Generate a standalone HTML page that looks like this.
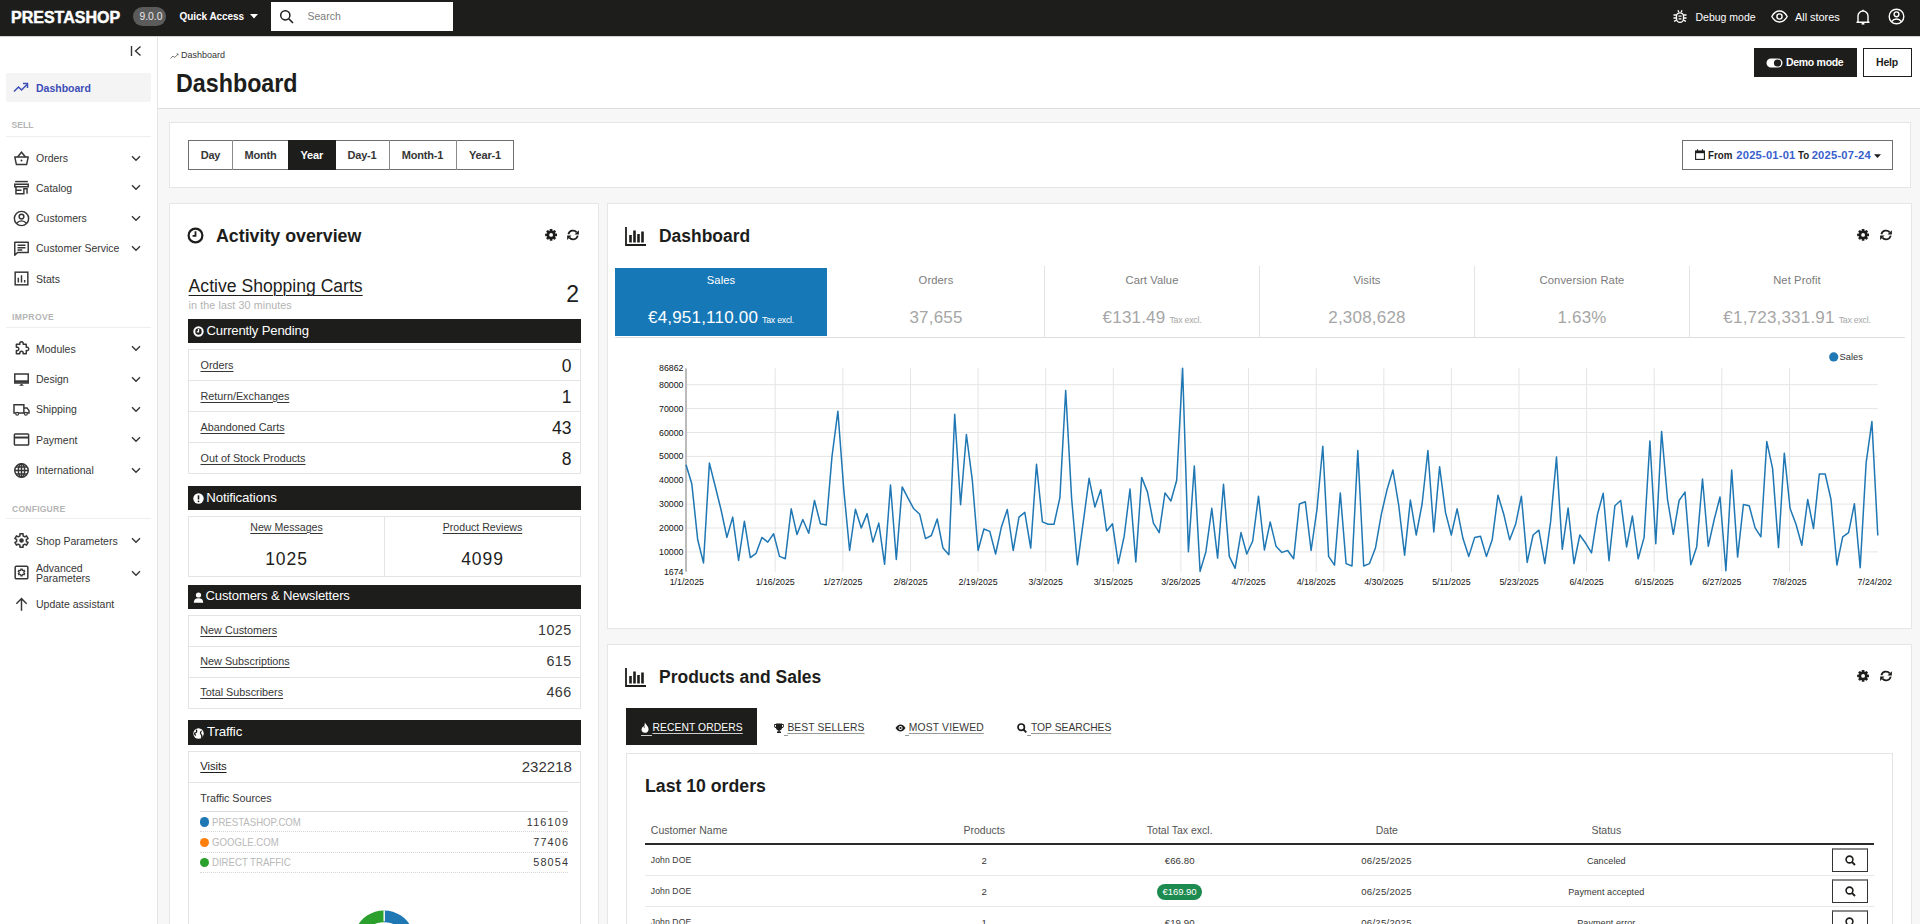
<!DOCTYPE html>
<html><head><meta charset="utf-8">
<style>
*{box-sizing:border-box;margin:0;padding:0}
html,body{width:1920px;height:924px;overflow:hidden;background:#f7f7f7;font-family:"Liberation Sans",sans-serif;color:#1d1d1b}
.abs{position:absolute}
#top{position:absolute;left:0;top:0;width:1920px;height:36px;background:#1d1d1b}
#side{position:absolute;left:0;top:36px;width:158px;height:888px;background:#fff;border-right:1px solid #e4e4e4}
#phead{position:absolute;left:158px;top:36px;width:1762px;height:73px;background:#fff;border-bottom:1px solid #dcdcdc}
.card{position:absolute;background:#fff;border:1px solid #e7e7e7}
.t{position:absolute;white-space:nowrap;line-height:1}
</style></head><body>
<!-- TOP BAR -->
<div id="top">
  <div class="t" style="left:11px;top:9.3px;font-size:17.4px;font-weight:700;color:#fff;letter-spacing:0px;-webkit-text-stroke:0.5px #fff;transform:scaleX(0.92);transform-origin:0 0">PRESTASHOP</div>
  <div class="abs" style="left:133px;top:7px;width:33px;height:19px;border-radius:10px;background:#5b5b5b"></div>
  <div class="t" style="left:139.5px;top:11.6px;font-size:10.3px;color:#e8e8e8">9.0.0</div>
  <div class="t" style="left:179.5px;top:11.6px;font-size:10px;font-weight:700;color:#fff;letter-spacing:-0.05px">Quick Access</div>
  <svg class="abs" style="left:250px;top:14px" width="8" height="5" viewBox="0 0 8 5"><path d="M0 0H8L4 4.5Z" fill="#fff"/></svg>
  <div class="abs" style="left:271px;top:2px;width:182px;height:29px;background:#fff"></div>
  <svg class="abs" style="left:279px;top:9px" width="16" height="16" viewBox="0 0 16 16"><circle cx="6.3" cy="6.3" r="4.6" fill="none" stroke="#1d1d1b" stroke-width="1.5"/><path d="M9.7 9.7L14 14" stroke="#1d1d1b" stroke-width="1.6"/></svg>
  <div class="t" style="left:307.5px;top:11.1px;font-size:10.5px;color:#7a7a7a">Search</div>
  <!-- right -->
  <svg class="abs" style="left:1673px;top:9px" width="14" height="15" viewBox="0 0 14 15"><g fill="none" stroke="#fff" stroke-width="1.3"><rect x="3.5" y="3.8" width="7" height="9.5" rx="3.5"/><path d="M5 1.2L5.8 3.2M9 1.2L8.2 3.2M0.5 6H3.5M10.5 6H13.5M0.5 9H3.5M10.5 9H13.5M1 12.3L3.6 11.2M13 12.3L10.4 11.2M5.5 7.2H8.5M5.5 9.8H8.5"/></g></svg>
  <div class="t" style="left:1695.5px;top:11.5px;font-size:10.5px;color:#fff">Debug mode</div>
  <svg class="abs" style="left:1771px;top:10px" width="17" height="13" viewBox="0 0 17 13"><path d="M0.8 6.5C3 2.4 5.6 1 8.5 1S14 2.4 16.2 6.5C14 10.6 11.4 12 8.5 12S3 10.6 0.8 6.5Z" fill="none" stroke="#fff" stroke-width="1.4"/><circle cx="8.5" cy="6.5" r="2.6" fill="none" stroke="#fff" stroke-width="1.4"/></svg>
  <div class="t" style="left:1795px;top:11.5px;font-size:11px;color:#fff;letter-spacing:-0.05px">All stores</div>
  <svg class="abs" style="left:1856px;top:9px" width="14" height="16" viewBox="0 0 14 16"><path d="M2 12.5V7A5 5 0 0 1 12 7V12.5L13 13.3H1Z" fill="none" stroke="#fff" stroke-width="1.4" stroke-linejoin="round"/><path d="M5.6 14.8H8.4" stroke="#fff" stroke-width="1.6"/><path d="M7 0.8V2" stroke="#fff" stroke-width="1.4"/></svg>
  <svg class="abs" style="left:1888px;top:8px" width="17" height="17" viewBox="0 0 17 17"><circle cx="8.5" cy="8.5" r="7.3" fill="none" stroke="#fff" stroke-width="1.4"/><circle cx="8.5" cy="6.3" r="2.4" fill="none" stroke="#fff" stroke-width="1.4"/><path d="M3.6 13.6C5 11.6 6.5 11 8.5 11S12 11.6 13.4 13.6" fill="none" stroke="#fff" stroke-width="1.4"/></svg>
</div>
<!-- SIDEBAR -->
<div id="side">
  <svg class="abs" style="left:130px;top:9px" width="12" height="12" viewBox="0 0 12 12"><path d="M1.5 1V11" stroke="#333" stroke-width="1.4"/><path d="M10.5 1.5L5.5 6L10.5 10.5" fill="none" stroke="#333" stroke-width="1.4"/></svg>
  <div class="abs" style="left:6px;top:37px;width:145px;height:29px;background:#f4f4f4;border-radius:2px"></div>
  <svg class="abs" style="left:13px;top:46px" width="16" height="11" viewBox="0 0 16 11"><path d="M1 9.5L5.5 5L8.5 8L14 2.5" fill="none" stroke="#3d4db8" stroke-width="1.5"/><path d="M10 1.5H14.5V6" fill="none" stroke="#3d4db8" stroke-width="1.5"/></svg>
  <div class="t" style="left:36px;top:46.7px;font-size:10.5px;font-weight:700;color:#3d4db8">Dashboard</div>

  <div class="t" style="left:11.5px;top:85.3px;font-size:8.6px;font-weight:700;color:#b5b5b5">SELL</div>
  <div class="abs" style="left:6px;top:100px;width:145px;height:1px;background:#eeeeee"></div>
  <div class="t" style="left:12px;top:277px;font-size:8.6px;font-weight:700;color:#b5b5b5;letter-spacing:0.35px">IMPROVE</div>
  <div class="abs" style="left:6px;top:291px;width:145px;height:1px;background:#eeeeee"></div>
  <div class="t" style="left:12px;top:468.5px;font-size:8.6px;font-weight:700;color:#b5b5b5;letter-spacing:0.2px">CONFIGURE</div>
  <div class="abs" style="left:6px;top:482px;width:145px;height:1px;background:#eeeeee"></div>
  <div class="t" style="left:36px;top:117.3px;font-size:10.5px;color:#363636">Orders</div>
  <svg class="abs" style="left:11.6px;top:112.9px" width="19" height="19" viewBox="0 0 24 24"><path d="M3.5 10H20.5L18.5 19.5H5.5Z" stroke="#363636" stroke-width="1.85" fill="none" stroke-linejoin="round"/><path d="M7 10L12 4L17 10" stroke="#363636" stroke-width="1.85" fill="none"/><circle cx="12" cy="14.5" r="1.2" fill="#363636"/></svg>
  <svg class="abs" style="left:131px;top:118.9px" width="10" height="7" viewBox="0 0 10 7"><path d="M1 1.2L5 5.2L9 1.2" fill="none" stroke="#363636" stroke-width="1.4"/></svg>
  <div class="t" style="left:36px;top:146.8px;font-size:10.5px;color:#363636">Catalog</div>
  <svg class="abs" style="left:11.6px;top:142.4px" width="19" height="19" viewBox="0 0 24 24"><path d="M4 4.5H20" stroke="#363636" stroke-width="1.85" fill="none"/><path d="M3.5 8H20.5V11H3.5Z" stroke="#363636" stroke-width="1.85" fill="none"/><path d="M5 11V20H15V13.5H19V20M5 15.5H12" stroke="#363636" stroke-width="1.85" fill="none"/></svg>
  <svg class="abs" style="left:131px;top:148.4px" width="10" height="7" viewBox="0 0 10 7"><path d="M1 1.2L5 5.2L9 1.2" fill="none" stroke="#363636" stroke-width="1.4"/></svg>
  <div class="t" style="left:36px;top:177.1px;font-size:10.5px;color:#363636">Customers</div>
  <svg class="abs" style="left:11.6px;top:172.7px" width="19" height="19" viewBox="0 0 24 24"><circle cx="12" cy="12" r="9" stroke="#363636" stroke-width="1.85" fill="none"/><circle cx="12" cy="9.5" r="3" stroke="#363636" stroke-width="1.85" fill="none"/><path d="M6 18C7.6 15.8 9.6 15 12 15S16.4 15.8 18 18" stroke="#363636" stroke-width="1.85" fill="none"/></svg>
  <svg class="abs" style="left:131px;top:178.7px" width="10" height="7" viewBox="0 0 10 7"><path d="M1 1.2L5 5.2L9 1.2" fill="none" stroke="#363636" stroke-width="1.4"/></svg>
  <div class="t" style="left:36px;top:207.4px;font-size:10.5px;color:#363636">Customer Service</div>
  <svg class="abs" style="left:11.6px;top:203.0px" width="19" height="19" viewBox="0 0 24 24"><path d="M3.5 20.5V4H20.5V17H7Z" stroke="#363636" stroke-width="1.85" fill="none" stroke-linejoin="round"/><path d="M7 8H17M7 11H17M7 14H13" stroke="#363636" stroke-width="1.85" fill="none"/></svg>
  <svg class="abs" style="left:131px;top:209.0px" width="10" height="7" viewBox="0 0 10 7"><path d="M1 1.2L5 5.2L9 1.2" fill="none" stroke="#363636" stroke-width="1.4"/></svg>
  <div class="t" style="left:36px;top:237.6px;font-size:10.5px;color:#363636">Stats</div>
  <svg class="abs" style="left:11.6px;top:233.2px" width="19" height="19" viewBox="0 0 24 24"><rect x="4" y="4" width="16" height="16" stroke="#363636" stroke-width="1.85" fill="none"/><path d="M8 17V11M12 17V8M16 17V14" stroke="#363636" stroke-width="1.85" fill="none"/></svg>
  <div class="t" style="left:36px;top:307.8px;font-size:10.5px;color:#363636">Modules</div>
  <svg class="abs" style="left:11.6px;top:303.4px" width="19" height="19" viewBox="0 0 24 24"><path d="M4 8H8.5A2.2 2.2 0 1 1 12.5 8H16.5V12A2.2 2.2 0 1 1 16.5 16V20H12.5A2.2 2.2 0 1 0 8.5 20H4V16A2.2 2.2 0 1 0 4 12Z" stroke="#363636" stroke-width="1.85" fill="none" stroke-linejoin="round" transform="translate(1.5,-1.5)"/></svg>
  <svg class="abs" style="left:131px;top:309.4px" width="10" height="7" viewBox="0 0 10 7"><path d="M1 1.2L5 5.2L9 1.2" fill="none" stroke="#363636" stroke-width="1.4"/></svg>
  <div class="t" style="left:36px;top:338.0px;font-size:10.5px;color:#363636">Design</div>
  <svg class="abs" style="left:11.6px;top:333.6px" width="19" height="19" viewBox="0 0 24 24"><path d="M3.5 5H20.5V16.5H3.5Z" stroke="#363636" stroke-width="1.85" fill="none"/><path d="M3.5 14.5H20.5" stroke="#363636" stroke-width="3"/><path d="M9 20H15L12 17Z" fill="#363636"/></svg>
  <svg class="abs" style="left:131px;top:339.6px" width="10" height="7" viewBox="0 0 10 7"><path d="M1 1.2L5 5.2L9 1.2" fill="none" stroke="#363636" stroke-width="1.4"/></svg>
  <div class="t" style="left:36px;top:368.3px;font-size:10.5px;color:#363636">Shipping</div>
  <svg class="abs" style="left:11.6px;top:363.9px" width="19" height="19" viewBox="0 0 24 24"><path d="M2.5 6H15V16.5H2.5Z" stroke="#363636" stroke-width="1.85" fill="none"/><path d="M15 10H19L21.5 13.5V16.5H15" stroke="#363636" stroke-width="1.85" fill="none"/><circle cx="6.5" cy="17.5" r="1.8" fill="#fff" stroke="#363636" stroke-width="1.5"/><circle cx="17.5" cy="17.5" r="1.8" fill="#fff" stroke="#363636" stroke-width="1.5"/></svg>
  <svg class="abs" style="left:131px;top:369.9px" width="10" height="7" viewBox="0 0 10 7"><path d="M1 1.2L5 5.2L9 1.2" fill="none" stroke="#363636" stroke-width="1.4"/></svg>
  <div class="t" style="left:36px;top:398.6px;font-size:10.5px;color:#363636">Payment</div>
  <svg class="abs" style="left:11.6px;top:394.2px" width="19" height="19" viewBox="0 0 24 24"><rect x="3" y="5" width="18" height="14" rx="1" stroke="#363636" stroke-width="1.85" fill="none"/><path d="M3 9.5H21" stroke="#363636" stroke-width="2.5"/></svg>
  <svg class="abs" style="left:131px;top:400.2px" width="10" height="7" viewBox="0 0 10 7"><path d="M1 1.2L5 5.2L9 1.2" fill="none" stroke="#363636" stroke-width="1.4"/></svg>
  <div class="t" style="left:36px;top:428.9px;font-size:10.5px;color:#363636">International</div>
  <svg class="abs" style="left:11.6px;top:424.5px" width="19" height="19" viewBox="0 0 24 24"><circle cx="12" cy="12" r="8.5" stroke="#363636" stroke-width="1.85" fill="none"/><path d="M3.5 12H20.5M12 3.5V20.5M5 7.5H19M5 16.5H19" stroke="#363636" stroke-width="1.85" fill="none"/><ellipse cx="12" cy="12" rx="4" ry="8.5" stroke="#363636" stroke-width="1.85" fill="none"/></svg>
  <svg class="abs" style="left:131px;top:430.5px" width="10" height="7" viewBox="0 0 10 7"><path d="M1 1.2L5 5.2L9 1.2" fill="none" stroke="#363636" stroke-width="1.4"/></svg>
  <div class="t" style="left:36px;top:499.7px;font-size:10.5px;color:#363636">Shop Parameters</div>
  <svg class="abs" style="left:11.6px;top:495.3px" width="19" height="19" viewBox="0 0 24 24"><path d="M10.07 6.00L10.01 3.53L13.99 3.53L13.93 6.00L16.23 7.33L18.34 6.04L20.33 9.49L18.16 10.67L18.16 13.33L20.33 14.51L18.34 17.96L16.23 16.67L13.93 18.00L13.99 20.47L10.01 20.47L10.07 18.00L7.77 16.67L5.66 17.96L3.67 14.51L5.84 13.33L5.84 10.67L3.67 9.49L5.66 6.04L7.77 7.33Z" stroke="#363636" stroke-width="1.9" fill="none" stroke-linejoin="round"/><circle cx="12" cy="12" r="2.9" fill="#363636"/></svg>
  <svg class="abs" style="left:131px;top:501.3px" width="10" height="7" viewBox="0 0 10 7"><path d="M1 1.2L5 5.2L9 1.2" fill="none" stroke="#363636" stroke-width="1.4"/></svg>
  <div class="t" style="left:36px;top:526.6px;font-size:10.5px;color:#363636">Advanced</div>
  <div class="t" style="left:36px;top:537.4px;font-size:10.5px;color:#363636">Parameters</div>
  <svg class="abs" style="left:11.6px;top:526.7px" width="19" height="19" viewBox="0 0 24 24"><rect x="4" y="4" width="16" height="16" rx="1.5" stroke="#363636" stroke-width="1.9" fill="none"/><path d="M11.06 9.15L11.00 7.82L13.00 7.82L12.94 9.15L14.00 9.76L15.12 9.04L16.12 10.78L14.94 11.39L14.94 12.61L16.12 13.22L15.12 14.96L14.00 14.24L12.94 14.85L13.00 16.18L11.00 16.18L11.06 14.85L10.00 14.24L8.88 14.96L7.88 13.22L9.06 12.61L9.06 11.39L7.88 10.78L8.88 9.04L10.00 9.76Z" stroke="#363636" stroke-width="1.5" fill="none" stroke-linejoin="round"/></svg>
  <svg class="abs" style="left:131px;top:533.6px" width="10" height="7" viewBox="0 0 10 7"><path d="M1 1.2L5 5.2L9 1.2" fill="none" stroke="#363636" stroke-width="1.4"/></svg>
  <div class="t" style="left:36px;top:563.3px;font-size:10.5px;color:#363636">Update assistant</div>
  <svg class="abs" style="left:11.6px;top:558.9px" width="19" height="19" viewBox="0 0 24 24"><path d="M12 20V4.5M5.5 11L12 4.5L18.5 11" stroke="#363636" stroke-width="1.85" fill="none"/></svg>
</div>
<div class="abs" style="left:158px;top:36px;width:1762px;height:73px;background:#fff;border-bottom:1px solid #dedede"></div>
<div class="abs" style="left:0px;top:36px;width:1920px;height:1px;background:#d2d2d2"></div>
<svg class="abs" style="left:170px;top:53px" width="9" height="6" viewBox="0 0 9 6"><path d="M0.5 5.5L3 3L4.8 4.5L7.8 1.2" fill="none" stroke="#666" stroke-width="0.9"/><path d="M6.2 0.6H8.4V2.8Z" fill="#666"/></svg>
<div class="t" style="left:181px;top:50.8px;font-size:9px;font-weight:400;color:#363636;">Dashboard</div>
<div class="t" style="left:176px;top:70.5px;font-size:25.3px;font-weight:700;color:#1d1d1b;transform:scaleX(0.92);transform-origin:0 0">Dashboard</div>
<div class="abs" style="left:1754px;top:48px;width:103px;height:29px;background:#1d1d1b"></div>
<svg class="abs" style="left:1766px;top:58px" width="17" height="10" viewBox="0 0 17 10"><rect x="0.5" y="0.5" width="16" height="9" rx="4.5" fill="#fff"/><circle cx="11.5" cy="5" r="3.6" fill="#1d1d1b"/></svg>
<div class="t" style="left:1786px;top:57.4px;font-size:10.5px;font-weight:700;color:#fff;letter-spacing:-0.3px">Demo mode</div>
<div class="abs" style="left:1863px;top:48px;width:49px;height:29px;background:#fff;border:1px solid #1d1d1b"></div>
<div class="t" style="left:1876px;top:57.4px;font-size:10.5px;font-weight:700;color:#1d1d1b;letter-spacing:-0.2px">Help</div>
<div class="abs" style="left:169px;top:122px;width:1742px;height:66px;background:#fff;border:1px solid #e6e6e6"></div>
<div class="abs" style="left:188px;top:140px;width:326px;height:30px;background:#fff;border:1px solid #6f6f6f"></div>
<div class="abs" style="left:232px;top:140px;width:1px;height:30px;background:#8a8a8a"></div>
<div class="abs" style="left:288px;top:140px;width:1px;height:30px;background:#8a8a8a"></div>
<div class="abs" style="left:335px;top:140px;width:1px;height:30px;background:#8a8a8a"></div>
<div class="abs" style="left:389px;top:140px;width:1px;height:30px;background:#8a8a8a"></div>
<div class="abs" style="left:456px;top:140px;width:1px;height:30px;background:#8a8a8a"></div>
<div class="abs" style="left:288px;top:140px;width:48px;height:30px;background:#1d1d1b"></div>
<div class="t" style="left:210.5px;transform:translateX(-50%);top:149.6px;font-size:11px;font-weight:700;color:#363636;letter-spacing:-0.2px">Day</div>
<div class="t" style="left:260.5px;transform:translateX(-50%);top:149.6px;font-size:11px;font-weight:700;color:#363636;letter-spacing:-0.2px">Month</div>
<div class="t" style="left:311.8px;transform:translateX(-50%);top:149.6px;font-size:11px;font-weight:700;color:#fff;letter-spacing:-0.2px">Year</div>
<div class="t" style="left:362px;transform:translateX(-50%);top:149.6px;font-size:11px;font-weight:700;color:#363636;letter-spacing:-0.2px">Day-1</div>
<div class="t" style="left:422.5px;transform:translateX(-50%);top:149.6px;font-size:11px;font-weight:700;color:#363636;letter-spacing:-0.2px">Month-1</div>
<div class="t" style="left:485px;transform:translateX(-50%);top:149.6px;font-size:11px;font-weight:700;color:#363636;letter-spacing:-0.2px">Year-1</div>
<div class="abs" style="left:1682px;top:140px;width:211px;height:30px;background:#fff;border:1px solid #6f6f6f"></div>
<svg class="abs" style="left:1695px;top:149px" width="10" height="11" viewBox="0 0 10 11"><rect x="0.6" y="2" width="8.8" height="8.4" fill="none" stroke="#1d1d1b" stroke-width="1.1"/><path d="M0.6 2H9.4V4.2H0.6Z" fill="#1d1d1b"/><path d="M2.5 0.3V2.5M7.5 0.3V2.5" stroke="#1d1d1b" stroke-width="1.1"/></svg>
<div class="t" style="left:1708.3px;top:149.5px;font-size:11.2px;font-weight:700;color:#1d1d1b;transform:scaleX(0.87);transform-origin:0 0">From</div>
<div class="t" style="left:1736.3px;top:149.5px;font-size:11.2px;font-weight:700;color:#3a5fcd;letter-spacing:0.2px">2025-01-01</div>
<div class="t" style="left:1797.8px;top:149.5px;font-size:11.2px;font-weight:700;color:#1d1d1b;transform:scaleX(0.87);transform-origin:0 0">To</div>
<div class="t" style="left:1811.7px;top:149.5px;font-size:11.2px;font-weight:700;color:#3a5fcd;letter-spacing:0.2px">2025-07-24</div>
<svg class="abs" style="left:1874px;top:153.5px" width="7" height="5" viewBox="0 0 7 5"><path d="M0 0.3H7L3.5 4Z" fill="#1d1d1b"/></svg>
<div class="abs" style="left:169px;top:203px;width:430px;height:897px;background:#fff;border:1px solid #e6e6e6"></div>
<svg class="abs" style="left:187px;top:227px" width="17" height="17" viewBox="0 0 17 17"><circle cx="8.5" cy="8.5" r="6.9" fill="none" stroke="#1d1d1b" stroke-width="2.2"/><path d="M8.5 4.3V8.9H5.6" fill="none" stroke="#1d1d1b" stroke-width="1.8"/></svg>
<div class="t" style="left:216.3px;top:226.9px;font-size:18px;font-weight:700;color:#1d1d1b;transform:scaleX(0.988);transform-origin:0 0">Activity overview</div>
<svg class="abs" style="left:544.5px;top:228.5px" width="13" height="13" viewBox="0 0 13 13"><g transform="translate(6.1 5.9)"><circle r="4.3" fill="#1d1d1b"/><rect x="-1.35" y="-5.9" width="2.7" height="2.6" rx="0.6" transform="rotate(0)" fill="#1d1d1b"/><rect x="-1.35" y="-5.9" width="2.7" height="2.6" rx="0.6" transform="rotate(45)" fill="#1d1d1b"/><rect x="-1.35" y="-5.9" width="2.7" height="2.6" rx="0.6" transform="rotate(90)" fill="#1d1d1b"/><rect x="-1.35" y="-5.9" width="2.7" height="2.6" rx="0.6" transform="rotate(135)" fill="#1d1d1b"/><rect x="-1.35" y="-5.9" width="2.7" height="2.6" rx="0.6" transform="rotate(180)" fill="#1d1d1b"/><rect x="-1.35" y="-5.9" width="2.7" height="2.6" rx="0.6" transform="rotate(225)" fill="#1d1d1b"/><rect x="-1.35" y="-5.9" width="2.7" height="2.6" rx="0.6" transform="rotate(270)" fill="#1d1d1b"/><rect x="-1.35" y="-5.9" width="2.7" height="2.6" rx="0.6" transform="rotate(315)" fill="#1d1d1b"/><circle r="1.9" fill="#fff"/></g></svg>
<svg class="abs" style="left:567px;top:228.5px" width="13" height="13" viewBox="0 0 13 13"><path d="M1.4 5.3A4.7 4.7 0 0 1 9.7 3.4" fill="none" stroke="#1d1d1b" stroke-width="1.75"/><path d="M10.7 6.6A4.7 4.7 0 0 1 2.4 8.6" fill="none" stroke="#1d1d1b" stroke-width="1.75"/><path d="M11.9 1.2V5.6H7.5Z" fill="#1d1d1b"/><path d="M0.1 10.9V6.5H4.5Z" fill="#1d1d1b"/></svg>
<div class="t" style="left:188.6px;top:278.1px;font-size:17.6px;font-weight:400;color:#1d1d1b;letter-spacing:0px"><u style="text-decoration-thickness:1.2px;text-underline-offset:2.5px">Active Shopping Carts</u></div>
<div class="t" style="left:188.6px;top:300.2px;font-size:10.7px;font-weight:400;color:#b3b3b3;letter-spacing:0.1px">in the last 30 minutes</div>
<div class="t" style="right:1341px;top:283.0px;font-size:23px;font-weight:400;color:#1d1d1b;">2</div>
<div class="abs" style="left:188px;top:319px;width:393px;height:24px;background:#1d1d1b"></div>
<svg class="abs" style="left:193px;top:326.0px" width="11" height="11" viewBox="0 0 11 11"><circle cx="5.5" cy="5.5" r="4.2" fill="none" stroke="#fff" stroke-width="2"/><path d="M5.5 3V5.8H3.8" fill="none" stroke="#fff" stroke-width="1.3"/></svg>
<div class="t" style="left:206.5px;top:323.5px;font-size:13.1px;font-weight:400;color:#fff;letter-spacing:-0.15px">Currently Pending</div>
<div class="abs" style="left:188px;top:349px;width:393px;height:125px;background:#fff;border:1px solid #e4e4e4"></div>
<div class="abs" style="left:189px;top:380px;width:391px;height:1px;background:#e4e4e4"></div>
<div class="abs" style="left:189px;top:411px;width:391px;height:1px;background:#e4e4e4"></div>
<div class="abs" style="left:189px;top:442px;width:391px;height:1px;background:#e4e4e4"></div>
<div class="t" style="left:200.5px;top:359.6px;font-size:10.8px;font-weight:400;color:#363636;letter-spacing:0px"><u style="text-decoration-thickness:1px;text-underline-offset:1.5px">Orders</u></div>
<div class="t" style="right:1348.5px;top:357.7px;font-size:17.5px;font-weight:400;color:#1d1d1b;">0</div>
<div class="t" style="left:200.5px;top:390.6px;font-size:10.8px;font-weight:400;color:#363636;letter-spacing:0px"><u style="text-decoration-thickness:1px;text-underline-offset:1.5px">Return/Exchanges</u></div>
<div class="t" style="right:1348.5px;top:388.7px;font-size:17.5px;font-weight:400;color:#1d1d1b;">1</div>
<div class="t" style="left:200.5px;top:421.6px;font-size:10.8px;font-weight:400;color:#363636;letter-spacing:0px"><u style="text-decoration-thickness:1px;text-underline-offset:1.5px">Abandoned Carts</u></div>
<div class="t" style="right:1348.5px;top:419.7px;font-size:17.5px;font-weight:400;color:#1d1d1b;">43</div>
<div class="t" style="left:200.5px;top:452.6px;font-size:10.8px;font-weight:400;color:#363636;letter-spacing:0px"><u style="text-decoration-thickness:1px;text-underline-offset:1.5px">Out of Stock Products</u></div>
<div class="t" style="right:1348.5px;top:450.7px;font-size:17.5px;font-weight:400;color:#1d1d1b;">8</div>
<div class="abs" style="left:188px;top:486px;width:393px;height:24px;background:#1d1d1b"></div>
<svg class="abs" style="left:193px;top:493.0px" width="11" height="11" viewBox="0 0 11 11"><circle cx="5.5" cy="5.5" r="5.2" fill="#fff"/><path d="M5.5 2.3V6.5" stroke="#1d1d1b" stroke-width="1.6"/><circle cx="5.5" cy="8.3" r="0.9" fill="#1d1d1b"/></svg>
<div class="t" style="left:206.2px;top:490.8px;font-size:13.3px;font-weight:400;color:#fff;letter-spacing:-0.15px">Notifications</div>
<div class="abs" style="left:188px;top:516px;width:393px;height:61px;background:#fff;border:1px solid #e4e4e4"></div>
<div class="abs" style="left:384px;top:517px;width:1px;height:59px;background:#e4e4e4"></div>
<div class="t" style="left:286.5px;transform:translateX(-50%);top:521.6px;font-size:10.6px;font-weight:400;color:#363636;letter-spacing:0px"><u style="text-decoration-thickness:1px;text-underline-offset:1.5px">New Messages</u></div>
<div class="t" style="left:482.5px;transform:translateX(-50%);top:521.6px;font-size:10.6px;font-weight:400;color:#363636;letter-spacing:0px"><u style="text-decoration-thickness:1px;text-underline-offset:1.5px">Product Reviews</u></div>
<div class="t" style="left:286.5px;transform:translateX(-50%);top:550.7px;font-size:17.5px;font-weight:400;color:#1d1d1b;letter-spacing:0.9px">1025</div>
<div class="t" style="left:482.5px;transform:translateX(-50%);top:550.7px;font-size:17.5px;font-weight:400;color:#1d1d1b;letter-spacing:0.9px">4099</div>
<div class="abs" style="left:188px;top:585px;width:393px;height:24px;background:#1d1d1b"></div>
<svg class="abs" style="left:193px;top:592.0px" width="11" height="11" viewBox="0 0 11 11"><circle cx="5.5" cy="3" r="2.6" fill="#fff"/><path d="M0.8 10.8C0.8 7.5 2.5 6.2 5.5 6.2S10.2 7.5 10.2 10.8Z" fill="#fff"/></svg>
<div class="t" style="left:205.5px;top:589.3px;font-size:13.1px;font-weight:400;color:#fff;letter-spacing:-0.15px">Customers &amp; Newsletters</div>
<div class="abs" style="left:188px;top:615px;width:393px;height:94px;background:#fff;border:1px solid #e4e4e4"></div>
<div class="abs" style="left:189px;top:646px;width:391px;height:1px;background:#e4e4e4"></div>
<div class="abs" style="left:189px;top:677px;width:391px;height:1px;background:#e4e4e4"></div>
<div class="t" style="left:200.3px;top:624.9px;font-size:10.8px;font-weight:400;color:#363636;letter-spacing:0px"><u style="text-decoration-thickness:1px;text-underline-offset:1.5px">New Customers</u></div>
<div class="t" style="right:1348.5px;top:623.4px;font-size:14.3px;font-weight:400;color:#363636;letter-spacing:0.4px">1025</div>
<div class="t" style="left:200.3px;top:655.9px;font-size:10.8px;font-weight:400;color:#363636;letter-spacing:0px"><u style="text-decoration-thickness:1px;text-underline-offset:1.5px">New Subscriptions</u></div>
<div class="t" style="right:1348.5px;top:654.4px;font-size:14.3px;font-weight:400;color:#363636;letter-spacing:0.4px">615</div>
<div class="t" style="left:200.3px;top:686.9px;font-size:10.8px;font-weight:400;color:#363636;letter-spacing:0px"><u style="text-decoration-thickness:1px;text-underline-offset:1.5px">Total Subscribers</u></div>
<div class="t" style="right:1348.5px;top:685.4px;font-size:14.3px;font-weight:400;color:#363636;letter-spacing:0.4px">466</div>
<div class="abs" style="left:188px;top:720px;width:393px;height:25px;background:#1d1d1b"></div>
<svg class="abs" style="left:193px;top:727.5px" width="11" height="11" viewBox="0 0 11 11"><circle cx="5.5" cy="5.5" r="5.2" fill="#fff"/><path d="M3 1.8C4.5 3 3.5 4.5 2.2 4.8S1.5 7 3 7.3M8.8 3C7.5 3.5 7 5 8 6.2S9.5 8.5 8.3 9.8" fill="none" stroke="#1d1d1b" stroke-width="1.3"/></svg>
<div class="t" style="left:207px;top:725.3px;font-size:13.3px;font-weight:400;color:#fff;letter-spacing:-0.15px">Traffic</div>
<div class="abs" style="left:188px;top:751px;width:393px;height:349px;background:#fff;border:1px solid #e4e4e4"></div>
<div class="abs" style="left:189px;top:782px;width:391px;height:1px;background:#e4e4e4"></div>
<div class="t" style="left:200.3px;top:760.5px;font-size:11.3px;font-weight:400;color:#1d1d1b;letter-spacing:-0.1px"><u style="text-decoration-thickness:1px;text-underline-offset:1.5px">Visits</u></div>
<div class="t" style="right:1348.2px;top:759.1px;font-size:15px;font-weight:400;color:#363636;letter-spacing:0px">232218</div>
<div class="t" style="left:200.3px;top:793.3px;font-size:10.7px;font-weight:400;color:#363636;letter-spacing:0px">Traffic Sources</div>
<div class="abs" style="left:200px;top:811px;width:368px;height:1px;background:#dcdcdc"></div>
<div class="abs" style="left:200px;top:817.2px;width:9.4px;height:9.4px;border-radius:50%;background:#1f77b4"></div>
<div class="t" style="left:212px;top:816.5px;font-size:10.8px;font-weight:400;color:#b8b8b8;letter-spacing:0px;transform:scaleX(0.89);transform-origin:0 0">PRESTASHOP.COM</div>
<div class="t" style="right:1350.8px;top:816.5px;font-size:10.8px;font-weight:700;color:#363636;letter-spacing:1.2px;font-weight:500">116109</div>
<div class="abs" style="left:200px;top:831px;width:368px;height:1px;border-top:1px dotted #d6d6d6"></div>
<div class="abs" style="left:200px;top:837.7px;width:9.4px;height:9.4px;border-radius:50%;background:#ff7f0e"></div>
<div class="t" style="left:212px;top:837.0px;font-size:10.8px;font-weight:400;color:#b8b8b8;letter-spacing:0px;transform:scaleX(0.89);transform-origin:0 0">GOOGLE.COM</div>
<div class="t" style="right:1350.8px;top:837.0px;font-size:10.8px;font-weight:700;color:#363636;letter-spacing:1.2px;font-weight:500">77406</div>
<div class="abs" style="left:200px;top:852px;width:368px;height:1px;border-top:1px dotted #d6d6d6"></div>
<div class="abs" style="left:200px;top:858.0px;width:9.4px;height:9.4px;border-radius:50%;background:#2ca02c"></div>
<div class="t" style="left:212px;top:857.3px;font-size:10.8px;font-weight:400;color:#b8b8b8;letter-spacing:0px;transform:scaleX(0.89);transform-origin:0 0">DIRECT TRAFFIC</div>
<div class="t" style="right:1350.8px;top:857.3px;font-size:10.8px;font-weight:700;color:#363636;letter-spacing:1.2px;font-weight:500">58054</div>
<div class="abs" style="left:200px;top:872px;width:368px;height:1px;border-top:1px dotted #d6d6d6"></div>
<svg class="abs" style="left:353px;top:910.3px" width="62" height="62" viewBox="0 0 62 62"><g transform="translate(31 31)"><path d="M0 -30.5A30.5 30.5 0 0 1 21.6 21.6L14 14A18.8 18.8 0 0 0 0 -18.8Z" fill="#1f77b4"/><path d="M0 -30.5A30.5 30.5 0 0 0 -21.6 21.6L-14 14A18.8 18.8 0 0 1 0 -18.8Z" fill="#2ca02c"/><path d="M0.2 -30.5V-19.8" stroke="#fff" stroke-width="1.4"/></g></svg>
<div class="abs" style="left:607px;top:203px;width:1305px;height:426px;background:#fff;border:1px solid #e6e6e6"></div>
<svg class="abs" style="left:625px;top:226px" width="22" height="20" viewBox="0 0 22 20"><path d="M1 1V19H21" fill="none" stroke="#1d1d1b" stroke-width="1.8"/><path d="M5.5 16.5V9M9.5 16.5V4.5M13.5 16.5V8M17.5 16.5V5.5" stroke="#1d1d1b" stroke-width="2.6"/></svg>
<div class="t" style="left:659px;top:226.9px;font-size:18px;font-weight:700;color:#1d1d1b;transform:scaleX(0.97);transform-origin:0 0">Dashboard</div>
<svg class="abs" style="left:1856.5px;top:228.5px" width="13" height="13" viewBox="0 0 13 13"><g transform="translate(6.1 5.9)"><circle r="4.3" fill="#1d1d1b"/><rect x="-1.35" y="-5.9" width="2.7" height="2.6" rx="0.6" transform="rotate(0)" fill="#1d1d1b"/><rect x="-1.35" y="-5.9" width="2.7" height="2.6" rx="0.6" transform="rotate(45)" fill="#1d1d1b"/><rect x="-1.35" y="-5.9" width="2.7" height="2.6" rx="0.6" transform="rotate(90)" fill="#1d1d1b"/><rect x="-1.35" y="-5.9" width="2.7" height="2.6" rx="0.6" transform="rotate(135)" fill="#1d1d1b"/><rect x="-1.35" y="-5.9" width="2.7" height="2.6" rx="0.6" transform="rotate(180)" fill="#1d1d1b"/><rect x="-1.35" y="-5.9" width="2.7" height="2.6" rx="0.6" transform="rotate(225)" fill="#1d1d1b"/><rect x="-1.35" y="-5.9" width="2.7" height="2.6" rx="0.6" transform="rotate(270)" fill="#1d1d1b"/><rect x="-1.35" y="-5.9" width="2.7" height="2.6" rx="0.6" transform="rotate(315)" fill="#1d1d1b"/><circle r="1.9" fill="#fff"/></g></svg>
<svg class="abs" style="left:1880px;top:228.5px" width="13" height="13" viewBox="0 0 13 13"><path d="M1.4 5.3A4.7 4.7 0 0 1 9.7 3.4" fill="none" stroke="#1d1d1b" stroke-width="1.75"/><path d="M10.7 6.6A4.7 4.7 0 0 1 2.4 8.6" fill="none" stroke="#1d1d1b" stroke-width="1.75"/><path d="M11.9 1.2V5.6H7.5Z" fill="#1d1d1b"/><path d="M0.1 10.9V6.5H4.5Z" fill="#1d1d1b"/></svg>
<div class="abs" style="left:615px;top:268px;width:212px;height:68px;background:#1778b8"></div>
<div class="abs" style="left:615px;top:337px;width:1290px;height:1px;background:#dedede"></div>
<div class="abs" style="left:1044px;top:266px;width:1px;height:71px;background:#e4e4e4"></div>
<div class="abs" style="left:1259px;top:266px;width:1px;height:71px;background:#e4e4e4"></div>
<div class="abs" style="left:1474px;top:266px;width:1px;height:71px;background:#e4e4e4"></div>
<div class="abs" style="left:1689px;top:266px;width:1px;height:71px;background:#e4e4e4"></div>
<div class="t" style="left:721px;transform:translateX(-50%);top:274.6px;font-size:11.2px;font-weight:400;color:#fff;letter-spacing:0.1px">Sales</div>
<div class="t" style="left:721px;transform:translateX(-50%);top:309.0px;font-size:17px;font-weight:400;color:#fff;"><span style="font-size:17px;letter-spacing:0.2px">€4,951,110.00</span><span style="font-size:8.8px;letter-spacing:-0.25px;margin-left:4px">Tax excl.</span></div>
<div class="t" style="left:936px;transform:translateX(-50%);top:274.6px;font-size:11.2px;font-weight:400;color:#7b7b7b;letter-spacing:0.1px">Orders</div>
<div class="t" style="left:936px;transform:translateX(-50%);top:309.0px;font-size:17px;font-weight:400;color:#a6a6a6;"><span style="font-size:17px;letter-spacing:0.2px">37,655</span></div>
<div class="t" style="left:1152px;transform:translateX(-50%);top:274.6px;font-size:11.2px;font-weight:400;color:#7b7b7b;letter-spacing:0.1px">Cart Value</div>
<div class="t" style="left:1152px;transform:translateX(-50%);top:309.0px;font-size:17px;font-weight:400;color:#a6a6a6;"><span style="font-size:17px;letter-spacing:0.2px">€131.49</span><span style="font-size:8.8px;letter-spacing:-0.25px;margin-left:4px">Tax excl.</span></div>
<div class="t" style="left:1367px;transform:translateX(-50%);top:274.6px;font-size:11.2px;font-weight:400;color:#7b7b7b;letter-spacing:0.1px">Visits</div>
<div class="t" style="left:1367px;transform:translateX(-50%);top:309.0px;font-size:17px;font-weight:400;color:#a6a6a6;"><span style="font-size:17px;letter-spacing:0.2px">2,308,628</span></div>
<div class="t" style="left:1582px;transform:translateX(-50%);top:274.6px;font-size:11.2px;font-weight:400;color:#7b7b7b;letter-spacing:0.1px">Conversion Rate</div>
<div class="t" style="left:1582px;transform:translateX(-50%);top:309.0px;font-size:17px;font-weight:400;color:#a6a6a6;"><span style="font-size:17px;letter-spacing:0.2px">1.63%</span></div>
<div class="t" style="left:1797px;transform:translateX(-50%);top:274.6px;font-size:11.2px;font-weight:400;color:#7b7b7b;letter-spacing:0.1px">Net Profit</div>
<div class="t" style="left:1797px;transform:translateX(-50%);top:309.0px;font-size:17px;font-weight:400;color:#a6a6a6;"><span style="font-size:17px;letter-spacing:0.2px">€1,723,331.91</span><span style="font-size:8.8px;letter-spacing:-0.25px;margin-left:4px">Tax excl.</span></div>
<svg class="abs" style="left:0;top:0" width="1920" height="924" viewBox="0 0 1920 924"><path d="M686 551.9H1877.8" stroke="#e5e5e5" stroke-width="1"/><path d="M686 528.0H1877.8" stroke="#e5e5e5" stroke-width="1"/><path d="M686 504.1H1877.8" stroke="#e5e5e5" stroke-width="1"/><path d="M686 480.2H1877.8" stroke="#e5e5e5" stroke-width="1"/><path d="M686 456.4H1877.8" stroke="#e5e5e5" stroke-width="1"/><path d="M686 432.5H1877.8" stroke="#e5e5e5" stroke-width="1"/><path d="M686 408.6H1877.8" stroke="#e5e5e5" stroke-width="1"/><path d="M686 384.7H1877.8" stroke="#e5e5e5" stroke-width="1"/><path d="M775.2 368.3V571.8" stroke="#e5e5e5" stroke-width="1"/><path d="M842.8 368.3V571.8" stroke="#e5e5e5" stroke-width="1"/><path d="M910.5 368.3V571.8" stroke="#e5e5e5" stroke-width="1"/><path d="M978.1 368.3V571.8" stroke="#e5e5e5" stroke-width="1"/><path d="M1045.7 368.3V571.8" stroke="#e5e5e5" stroke-width="1"/><path d="M1113.3 368.3V571.8" stroke="#e5e5e5" stroke-width="1"/><path d="M1180.9 368.3V571.8" stroke="#e5e5e5" stroke-width="1"/><path d="M1248.5 368.3V571.8" stroke="#e5e5e5" stroke-width="1"/><path d="M1316.2 368.3V571.8" stroke="#e5e5e5" stroke-width="1"/><path d="M1383.8 368.3V571.8" stroke="#e5e5e5" stroke-width="1"/><path d="M1451.4 368.3V571.8" stroke="#e5e5e5" stroke-width="1"/><path d="M1519.0 368.3V571.8" stroke="#e5e5e5" stroke-width="1"/><path d="M1586.6 368.3V571.8" stroke="#e5e5e5" stroke-width="1"/><path d="M1654.2 368.3V571.8" stroke="#e5e5e5" stroke-width="1"/><path d="M1721.8 368.3V571.8" stroke="#e5e5e5" stroke-width="1"/><path d="M1789.5 368.3V571.8" stroke="#e5e5e5" stroke-width="1"/><text x="683.5" y="554.9" text-anchor="end" font-size="8.8" fill="#111" font-family="Liberation Sans">10000</text><text x="683.5" y="531.0" text-anchor="end" font-size="8.8" fill="#111" font-family="Liberation Sans">20000</text><text x="683.5" y="507.1" text-anchor="end" font-size="8.8" fill="#111" font-family="Liberation Sans">30000</text><text x="683.5" y="483.2" text-anchor="end" font-size="8.8" fill="#111" font-family="Liberation Sans">40000</text><text x="683.5" y="459.4" text-anchor="end" font-size="8.8" fill="#111" font-family="Liberation Sans">50000</text><text x="683.5" y="435.5" text-anchor="end" font-size="8.8" fill="#111" font-family="Liberation Sans">60000</text><text x="683.5" y="411.6" text-anchor="end" font-size="8.8" fill="#111" font-family="Liberation Sans">70000</text><text x="683.5" y="387.7" text-anchor="end" font-size="8.8" fill="#111" font-family="Liberation Sans">80000</text><text x="683.5" y="371.3" text-anchor="end" font-size="8.8" fill="#111" font-family="Liberation Sans">86862</text><text x="683.5" y="575" text-anchor="end" font-size="8.8" fill="#111" font-family="Liberation Sans">1674</text><text x="775.2" y="585.2" text-anchor="middle" font-size="8.8" fill="#111" font-family="Liberation Sans">1/16/2025</text><text x="842.8" y="585.2" text-anchor="middle" font-size="8.8" fill="#111" font-family="Liberation Sans">1/27/2025</text><text x="910.5" y="585.2" text-anchor="middle" font-size="8.8" fill="#111" font-family="Liberation Sans">2/8/2025</text><text x="978.1" y="585.2" text-anchor="middle" font-size="8.8" fill="#111" font-family="Liberation Sans">2/19/2025</text><text x="1045.7" y="585.2" text-anchor="middle" font-size="8.8" fill="#111" font-family="Liberation Sans">3/3/2025</text><text x="1113.3" y="585.2" text-anchor="middle" font-size="8.8" fill="#111" font-family="Liberation Sans">3/15/2025</text><text x="1180.9" y="585.2" text-anchor="middle" font-size="8.8" fill="#111" font-family="Liberation Sans">3/26/2025</text><text x="1248.5" y="585.2" text-anchor="middle" font-size="8.8" fill="#111" font-family="Liberation Sans">4/7/2025</text><text x="1316.2" y="585.2" text-anchor="middle" font-size="8.8" fill="#111" font-family="Liberation Sans">4/18/2025</text><text x="1383.8" y="585.2" text-anchor="middle" font-size="8.8" fill="#111" font-family="Liberation Sans">4/30/2025</text><text x="1451.4" y="585.2" text-anchor="middle" font-size="8.8" fill="#111" font-family="Liberation Sans">5/11/2025</text><text x="1519.0" y="585.2" text-anchor="middle" font-size="8.8" fill="#111" font-family="Liberation Sans">5/23/2025</text><text x="1586.6" y="585.2" text-anchor="middle" font-size="8.8" fill="#111" font-family="Liberation Sans">6/4/2025</text><text x="1654.2" y="585.2" text-anchor="middle" font-size="8.8" fill="#111" font-family="Liberation Sans">6/15/2025</text><text x="1721.8" y="585.2" text-anchor="middle" font-size="8.8" fill="#111" font-family="Liberation Sans">6/27/2025</text><text x="1789.5" y="585.2" text-anchor="middle" font-size="8.8" fill="#111" font-family="Liberation Sans">7/8/2025</text><text x="686.8" y="585.2" text-anchor="middle" font-size="8.8" fill="#111" font-family="Liberation Sans">1/1/2025</text><text x="1857.6" y="585.2" font-size="8.8" fill="#111" font-family="Liberation Sans">7/24/202</text><path d="M686 368.3V571.8" stroke="#aaa" stroke-width="1.6"/><path d="M686.0 464.8 L691.8 483.8 L697.7 539.8 L703.5 562.9 L709.4 463.1 L715.2 486.2 L721.1 510.0 L726.9 537.4 L732.7 517.1 L738.6 560.5 L744.4 521.2 L750.3 557.6 L756.1 553.3 L761.9 537.4 L767.8 542.1 L773.6 533.8 L779.5 556.4 L785.3 558.8 L791.2 508.8 L797.0 534.5 L802.8 519.5 L808.7 533.3 L814.5 500.5 L820.4 523.8 L826.2 525.0 L832.0 456.4 L837.9 411.2 L843.7 488.6 L849.6 550.5 L855.4 509.3 L861.3 527.9 L867.1 513.6 L872.9 542.1 L878.8 523.1 L884.6 564.3 L890.5 485.0 L896.3 559.5 L902.2 486.9 L908.0 498.1 L913.8 508.8 L919.7 514.3 L925.5 538.6 L931.4 535.5 L937.2 519.0 L943.0 548.1 L948.9 554.8 L954.7 414.3 L960.6 504.8 L966.4 434.5 L972.3 480.2 L978.1 550.5 L983.9 529.0 L989.8 531.4 L995.6 554.0 L1001.5 526.7 L1007.3 509.5 L1013.2 550.5 L1019.0 517.1 L1024.8 512.4 L1030.7 548.1 L1036.5 464.3 L1042.4 521.9 L1048.2 524.3 L1054.0 524.3 L1059.9 497.6 L1065.7 390.5 L1071.6 498.1 L1077.4 564.8 L1083.3 521.9 L1089.1 478.3 L1094.9 507.1 L1100.8 489.8 L1106.6 531.0 L1112.5 523.8 L1118.3 563.6 L1124.2 536.2 L1130.0 489.0 L1135.8 561.9 L1141.7 477.4 L1147.5 492.1 L1153.4 523.1 L1159.2 532.6 L1165.0 492.9 L1170.9 501.0 L1176.7 480.2 L1182.6 368.3 L1188.4 551.7 L1194.3 466.0 L1200.1 571.4 L1205.9 551.7 L1211.8 508.3 L1217.6 558.1 L1223.5 484.3 L1229.3 556.4 L1235.1 568.3 L1241.0 532.6 L1246.8 554.0 L1252.7 541.0 L1258.5 496.2 L1264.4 550.0 L1270.2 521.9 L1276.0 546.2 L1281.9 552.4 L1287.7 550.5 L1293.6 558.8 L1299.4 504.0 L1305.3 501.7 L1311.1 550.5 L1316.9 510.0 L1322.8 446.2 L1328.6 556.4 L1334.5 565.2 L1340.3 492.9 L1346.1 563.6 L1352.0 566.0 L1357.8 450.5 L1363.7 566.0 L1369.5 563.6 L1375.4 548.1 L1381.2 514.8 L1387.0 489.8 L1392.9 470.0 L1398.7 505.2 L1404.6 555.2 L1410.4 500.0 L1416.2 535.0 L1422.1 504.0 L1427.9 450.5 L1433.8 531.9 L1439.6 466.7 L1445.5 512.4 L1451.3 535.0 L1457.1 508.8 L1463.0 538.6 L1468.8 556.4 L1474.7 537.4 L1480.5 536.2 L1486.4 556.4 L1492.2 539.8 L1498.0 495.2 L1503.9 514.8 L1509.7 539.8 L1515.6 524.3 L1521.4 496.2 L1527.2 562.4 L1533.1 535.0 L1538.9 530.2 L1544.8 563.6 L1550.6 521.9 L1556.5 457.1 L1562.3 549.3 L1568.1 508.1 L1574.0 563.6 L1579.8 535.0 L1585.7 543.3 L1591.5 552.9 L1597.4 514.8 L1603.2 493.3 L1609.0 560.7 L1614.9 505.7 L1620.7 500.5 L1626.6 546.9 L1632.4 516.0 L1638.2 558.8 L1644.1 537.4 L1649.9 441.0 L1655.8 543.8 L1661.6 431.4 L1667.5 499.3 L1673.3 534.3 L1679.1 500.5 L1685.0 492.1 L1690.8 564.8 L1696.7 546.9 L1702.5 479.0 L1708.3 546.2 L1714.2 519.5 L1720.0 496.9 L1725.9 570.7 L1731.7 470.0 L1737.6 557.1 L1743.4 504.5 L1749.2 505.8 L1755.1 527.9 L1760.9 536.8 L1766.8 441.6 L1772.6 468.6 L1778.5 547.6 L1784.3 453.2 L1790.1 508.5 L1796.0 524.3 L1801.8 545.3 L1807.7 499.5 L1813.5 528.5 L1819.3 474.0 L1825.2 474.0 L1831.0 499.5 L1836.9 565.0 L1842.7 536.9 L1848.6 532.7 L1854.4 503.7 L1860.2 567.8 L1866.1 463.2 L1871.9 421.6 L1877.8 535.5" fill="none" stroke="#1f77b4" stroke-width="1.5" stroke-linejoin="round"/><circle cx="1833.7" cy="356.9" r="4.6" fill="#1f77b4"/><text x="1839.6" y="360.2" font-size="9.3" fill="#333" font-family="Liberation Sans">Sales</text></svg>
<div class="abs" style="left:607px;top:644px;width:1305px;height:456px;background:#fff;border:1px solid #e6e6e6"></div>
<svg class="abs" style="left:625px;top:667px" width="22" height="20" viewBox="0 0 22 20"><path d="M1 1V19H21" fill="none" stroke="#1d1d1b" stroke-width="1.8"/><path d="M5.5 16.5V9M9.5 16.5V4.5M13.5 16.5V8M17.5 16.5V5.5" stroke="#1d1d1b" stroke-width="2.6"/></svg>
<div class="t" style="left:659px;top:667.5px;font-size:18px;font-weight:700;color:#1d1d1b;transform:scaleX(0.971);transform-origin:0 0">Products and Sales</div>
<svg class="abs" style="left:1856.5px;top:669.5px" width="13" height="13" viewBox="0 0 13 13"><g transform="translate(6.1 5.9)"><circle r="4.3" fill="#1d1d1b"/><rect x="-1.35" y="-5.9" width="2.7" height="2.6" rx="0.6" transform="rotate(0)" fill="#1d1d1b"/><rect x="-1.35" y="-5.9" width="2.7" height="2.6" rx="0.6" transform="rotate(45)" fill="#1d1d1b"/><rect x="-1.35" y="-5.9" width="2.7" height="2.6" rx="0.6" transform="rotate(90)" fill="#1d1d1b"/><rect x="-1.35" y="-5.9" width="2.7" height="2.6" rx="0.6" transform="rotate(135)" fill="#1d1d1b"/><rect x="-1.35" y="-5.9" width="2.7" height="2.6" rx="0.6" transform="rotate(180)" fill="#1d1d1b"/><rect x="-1.35" y="-5.9" width="2.7" height="2.6" rx="0.6" transform="rotate(225)" fill="#1d1d1b"/><rect x="-1.35" y="-5.9" width="2.7" height="2.6" rx="0.6" transform="rotate(270)" fill="#1d1d1b"/><rect x="-1.35" y="-5.9" width="2.7" height="2.6" rx="0.6" transform="rotate(315)" fill="#1d1d1b"/><circle r="1.9" fill="#fff"/></g></svg>
<svg class="abs" style="left:1880px;top:669.5px" width="13" height="13" viewBox="0 0 13 13"><path d="M1.4 5.3A4.7 4.7 0 0 1 9.7 3.4" fill="none" stroke="#1d1d1b" stroke-width="1.75"/><path d="M10.7 6.6A4.7 4.7 0 0 1 2.4 8.6" fill="none" stroke="#1d1d1b" stroke-width="1.75"/><path d="M11.9 1.2V5.6H7.5Z" fill="#1d1d1b"/><path d="M0.1 10.9V6.5H4.5Z" fill="#1d1d1b"/></svg>
<div class="abs" style="left:626px;top:708px;width:131px;height:37px;background:#1d1d1b"></div>
<svg class="abs" style="left:641px;top:722px" width="8" height="11" viewBox="0 0 8 11"><path d="M4 0.5C5 3 8 4.5 7.5 8A3.6 3.6 0 0 1 0.5 8.2C0.4 6 1.8 4.8 2.5 4C2.5 5.5 3.2 6 3.6 6.2C3.2 4.5 3.5 2 4 0.5Z" fill="#fff"/></svg>
<div class="abs" style="left:641px;top:734.5px;width:11px;height:1px;background:#ccc"></div>
<div class="t" style="left:652.4px;top:723.3px;font-size:10.3px;font-weight:400;color:#fff;letter-spacing:0.1px"><span style="text-decoration:underline;text-decoration-color:#ccc;text-decoration-thickness:1px;text-underline-offset:2px">RECENT ORDERS</span></div>
<svg class="abs" style="left:774px;top:723px" width="10" height="10" viewBox="0 0 10 10"><path d="M2 0.5H8V4.5A3 3 0 0 1 2 4.5Z" fill="#1d1d1b"/><path d="M2 1.5H0.5V2.5A2 2 0 0 0 2.5 4.8M8 1.5H9.5V2.5A2 2 0 0 1 7.5 4.8" fill="none" stroke="#1d1d1b" stroke-width="1"/><path d="M4.3 7H5.7V8.5H7V10H3V8.5H4.3Z" fill="#1d1d1b"/></svg>
<div class="abs" style="left:784px;top:734.5px;width:4px;height:1px;background:#999"></div>
<div class="t" style="left:787.4px;top:723.3px;font-size:10.3px;font-weight:400;color:#363636;letter-spacing:0.1px"><span style="text-decoration:underline;text-decoration-color:#999;text-decoration-thickness:1px;text-underline-offset:2px">BEST SELLERS</span></div>
<svg class="abs" style="left:895px;top:723.5px" width="11" height="8" viewBox="0 0 11 8"><path d="M0.5 4C2 1.5 3.8 0.5 5.5 0.5S9 1.5 10.5 4C9 6.5 7.2 7.5 5.5 7.5S2 6.5 0.5 4Z" fill="#1d1d1b"/><circle cx="5.5" cy="4" r="2" fill="#fff"/><circle cx="5.5" cy="4" r="1.1" fill="#1d1d1b"/></svg>
<div class="abs" style="left:905px;top:734.5px;width:4px;height:1px;background:#999"></div>
<div class="t" style="left:908.7px;top:723.3px;font-size:10.3px;font-weight:400;color:#363636;letter-spacing:0.2px"><span style="text-decoration:underline;text-decoration-color:#999;text-decoration-thickness:1px;text-underline-offset:2px">MOST VIEWED</span></div>
<svg class="abs" style="left:1017px;top:723px" width="10" height="10" viewBox="0 0 10 10"><circle cx="4.2" cy="4.2" r="3.2" fill="none" stroke="#1d1d1b" stroke-width="1.7"/><path d="M6.5 6.5L9.3 9.3" stroke="#1d1d1b" stroke-width="1.9"/></svg>
<div class="abs" style="left:1027px;top:734.5px;width:4px;height:1px;background:#999"></div>
<div class="t" style="left:1031px;top:723.3px;font-size:10.3px;font-weight:400;color:#363636;letter-spacing:0px"><span style="text-decoration:underline;text-decoration-color:#999;text-decoration-thickness:1px;text-underline-offset:2px">TOP SEARCHES</span></div>
<div class="abs" style="left:626px;top:753px;width:1267px;height:347px;background:#fff;border:1px solid #e4e4e4"></div>
<div class="t" style="left:645px;top:776.5px;font-size:18px;font-weight:700;color:#1d1d1b;transform:scaleX(0.982);transform-origin:0 0">Last 10 orders</div>
<div class="t" style="left:650.8px;top:824.5px;font-size:10.5px;font-weight:400;color:#555;">Customer Name</div>
<div class="t" style="left:984.2px;transform:translateX(-50%);top:824.5px;font-size:10.5px;font-weight:400;color:#555;">Products</div>
<div class="t" style="left:1179.7px;transform:translateX(-50%);top:824.5px;font-size:10.5px;font-weight:400;color:#555;">Total Tax excl.</div>
<div class="t" style="left:1386.8px;transform:translateX(-50%);top:824.5px;font-size:10.5px;font-weight:400;color:#555;">Date</div>
<div class="t" style="left:1606.3px;transform:translateX(-50%);top:824.5px;font-size:10.5px;font-weight:400;color:#555;">Status</div>
<div class="abs" style="left:645px;top:843px;width:1229px;height:2px;background:#2a2a2a"></div>
<div class="t" style="left:650.8px;top:855.9px;font-size:8.6px;font-weight:400;color:#363636;letter-spacing:0.1px">John DOE</div>
<div class="t" style="left:984.2px;transform:translateX(-50%);top:855.8px;font-size:9.6px;font-weight:400;color:#363636;">2</div>
<div class="t" style="left:1179.7px;transform:translateX(-50%);top:855.8px;font-size:9.6px;font-weight:400;color:#363636;letter-spacing:0.1px">€66.80</div>
<div class="t" style="left:1386.5px;transform:translateX(-50%);top:855.8px;font-size:9.6px;font-weight:400;color:#363636;letter-spacing:0.25px">06/25/2025</div>
<div class="t" style="left:1606.3px;transform:translateX(-50%);top:856.6px;font-size:9.1px;font-weight:400;color:#363636;letter-spacing:0.05px">Canceled</div>
<div class="abs" style="left:645px;top:875px;width:1229px;height:1px;background:#e8e8e8"></div>
<div class="abs" style="left:1832px;top:847.5px;width:36px;height:24px;border:1px solid #333;border-top:2px solid #8a8a8a;background:#fff"></div>
<svg class="abs" style="left:1845px;top:854.5px" width="11" height="11" viewBox="0 0 11 11"><circle cx="4.5" cy="4.5" r="3.4" fill="none" stroke="#1d1d1b" stroke-width="1.6"/><path d="M6.9 6.9L10 10" stroke="#1d1d1b" stroke-width="1.9"/></svg>
<div class="t" style="left:650.8px;top:886.9px;font-size:8.6px;font-weight:400;color:#363636;letter-spacing:0.1px">John DOE</div>
<div class="t" style="left:984.2px;transform:translateX(-50%);top:886.8px;font-size:9.6px;font-weight:400;color:#363636;">2</div>
<div class="abs" style="left:1157px;top:884.2px;width:45px;height:15.5px;border-radius:8px;background:#1d8a4f"></div>
<div class="t" style="left:1179.5px;transform:translateX(-50%);top:886.8px;font-size:9.6px;font-weight:700;color:#fff;letter-spacing:-0.1px;font-weight:500">€169.90</div>
<div class="t" style="left:1386.5px;transform:translateX(-50%);top:886.8px;font-size:9.6px;font-weight:400;color:#363636;letter-spacing:0.25px">06/25/2025</div>
<div class="t" style="left:1606.3px;transform:translateX(-50%);top:887.6px;font-size:9.1px;font-weight:400;color:#363636;letter-spacing:0.05px">Payment accepted</div>
<div class="abs" style="left:645px;top:906px;width:1229px;height:1px;background:#e8e8e8"></div>
<div class="abs" style="left:1832px;top:878.5px;width:36px;height:24px;border:1px solid #333;border-top:2px solid #8a8a8a;background:#fff"></div>
<svg class="abs" style="left:1845px;top:885.5px" width="11" height="11" viewBox="0 0 11 11"><circle cx="4.5" cy="4.5" r="3.4" fill="none" stroke="#1d1d1b" stroke-width="1.6"/><path d="M6.9 6.9L10 10" stroke="#1d1d1b" stroke-width="1.9"/></svg>
<div class="t" style="left:650.8px;top:917.9px;font-size:8.6px;font-weight:400;color:#363636;letter-spacing:0.1px">John DOE</div>
<div class="t" style="left:984.2px;transform:translateX(-50%);top:917.8px;font-size:9.6px;font-weight:400;color:#363636;">1</div>
<div class="t" style="left:1179.7px;transform:translateX(-50%);top:917.8px;font-size:9.6px;font-weight:400;color:#363636;letter-spacing:0.1px">€19.90</div>
<div class="t" style="left:1386.5px;transform:translateX(-50%);top:917.8px;font-size:9.6px;font-weight:400;color:#363636;letter-spacing:0.25px">06/25/2025</div>
<div class="t" style="left:1606.3px;transform:translateX(-50%);top:918.6px;font-size:9.1px;font-weight:400;color:#363636;letter-spacing:0.05px">Payment error</div>
<div class="abs" style="left:645px;top:937px;width:1229px;height:1px;background:#e8e8e8"></div>
<div class="abs" style="left:1832px;top:909.5px;width:36px;height:24px;border:1px solid #333;border-top:2px solid #8a8a8a;background:#fff"></div>
<svg class="abs" style="left:1845px;top:916.5px" width="11" height="11" viewBox="0 0 11 11"><circle cx="4.5" cy="4.5" r="3.4" fill="none" stroke="#1d1d1b" stroke-width="1.6"/><path d="M6.9 6.9L10 10" stroke="#1d1d1b" stroke-width="1.9"/></svg>

</body></html>
